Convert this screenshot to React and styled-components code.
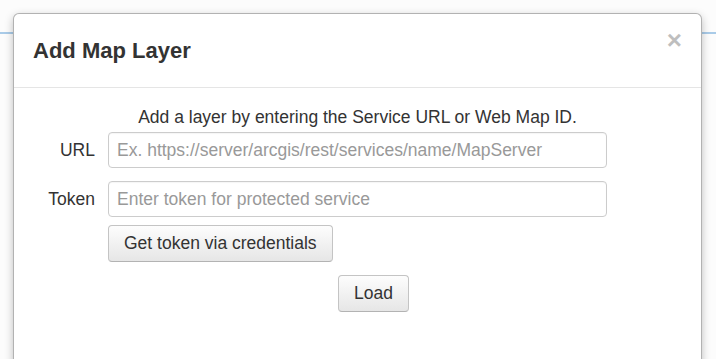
import React from "react";
import styled, { createGlobalStyle } from "styled-components";

const GlobalStyle = createGlobalStyle`
  html, body {
    margin: 0;
    height: 100%;
    overflow: hidden;
  }
  body {
    font-family: "Liberation Sans", Arial, sans-serif;
    color: #333;
    background:
      linear-gradient(to bottom, transparent 32px, #a9cbe8 32px, #a9cbe8 34px, transparent 34px),
      #fcfcfc;
  }
`;

const Backdrop = styled.div`
  padding: 13px 14px 0 13px;
`;

const Modal = styled.div`
  background: #fff;
  border: 1px solid rgba(0, 0, 0, 0.3);
  border-radius: 6px;
  box-shadow: 0 3px 9px rgba(0, 0, 0, 0.25);
  min-height: 400px;
`;

const Header = styled.div`
  display: flex;
  align-items: center;
  justify-content: space-between;
  height: 73px;
  padding: 0 19px 0 19px;
  border-bottom: 1px solid #e5e5e5;
`;

const Title = styled.h4`
  margin: 0;
  font-size: 22px;
  font-weight: bold;
  color: #333;
`;

const Close = styled.button`
  align-self: flex-start;
  margin-top: 13px;
  padding: 0;
  border: 0;
  background: none;
  font-family: "Liberation Sans", Arial, sans-serif;
  font-size: 26px;
  font-weight: bold;
  line-height: 1;
  color: #000;
  opacity: 0.25;
  cursor: pointer;
`;

const Body = styled.div`
  padding: 19px 0 0;
`;

const Intro = styled.p`
  margin: 0 0 4px;
  font-size: 17.5px;
  line-height: 21px;
  text-align: center;
`;

const Form = styled.div`
  display: grid;
  grid-template-columns: 81px 499px;
  column-gap: 13px;
  row-gap: 13px;
  align-items: center;
`;

const Label = styled.label`
  font-size: 17.5px;
  text-align: right;
`;

const Input = styled.input`
  box-sizing: border-box;
  width: 100%;
  height: 36px;
  padding: 6px 8px;
  border: 1px solid #ccc;
  border-radius: 4px;
  font-family: "Liberation Sans", Arial, sans-serif;
  font-size: 17.5px;
  color: #555;
  box-shadow: inset 0 1px 1px rgba(0, 0, 0, 0.04);
  &::placeholder {
    color: #999;
  }
`;

const Button = styled.button`
  box-sizing: border-box;
  height: 37px;
  padding: 0 15px;
  border: 1px solid #c4c4c4;
  border-bottom-color: #b3b3b3;
  border-radius: 4px;
  background: linear-gradient(to bottom, #fdfdfd 0%, #e6e6e6 100%);
  font-family: "Liberation Sans", Arial, sans-serif;
  font-size: 17.5px;
  color: #333;
  cursor: pointer;
`;

const CredRow = styled.div`
  grid-column: 2;
  margin-top: -5px;
`;

const LoadRow = styled.div`
  display: flex;
  justify-content: center;
  padding-left: 32px;
  margin-top: 13px;
`;

export default function App() {
  return (
    <>
      <GlobalStyle />
      <Backdrop>
        <Modal>
          <Header>
            <Title>Add Map Layer</Title>
            <Close aria-label="Close">×</Close>
          </Header>
          <Body>
            <Intro>Add a layer by entering the Service URL or Web Map ID.</Intro>
            <Form>
              <Label htmlFor="url">URL</Label>
              <Input
                id="url"
                placeholder="Ex. https://server/arcgis/rest/services/name/MapServer"
              />
              <Label htmlFor="token">Token</Label>
              <Input id="token" placeholder="Enter token for protected service" />
              <CredRow>
                <Button>Get token via credentials</Button>
              </CredRow>
            </Form>
            <LoadRow>
              <Button>Load</Button>
            </LoadRow>
          </Body>
        </Modal>
      </Backdrop>
    </>
  );
}
